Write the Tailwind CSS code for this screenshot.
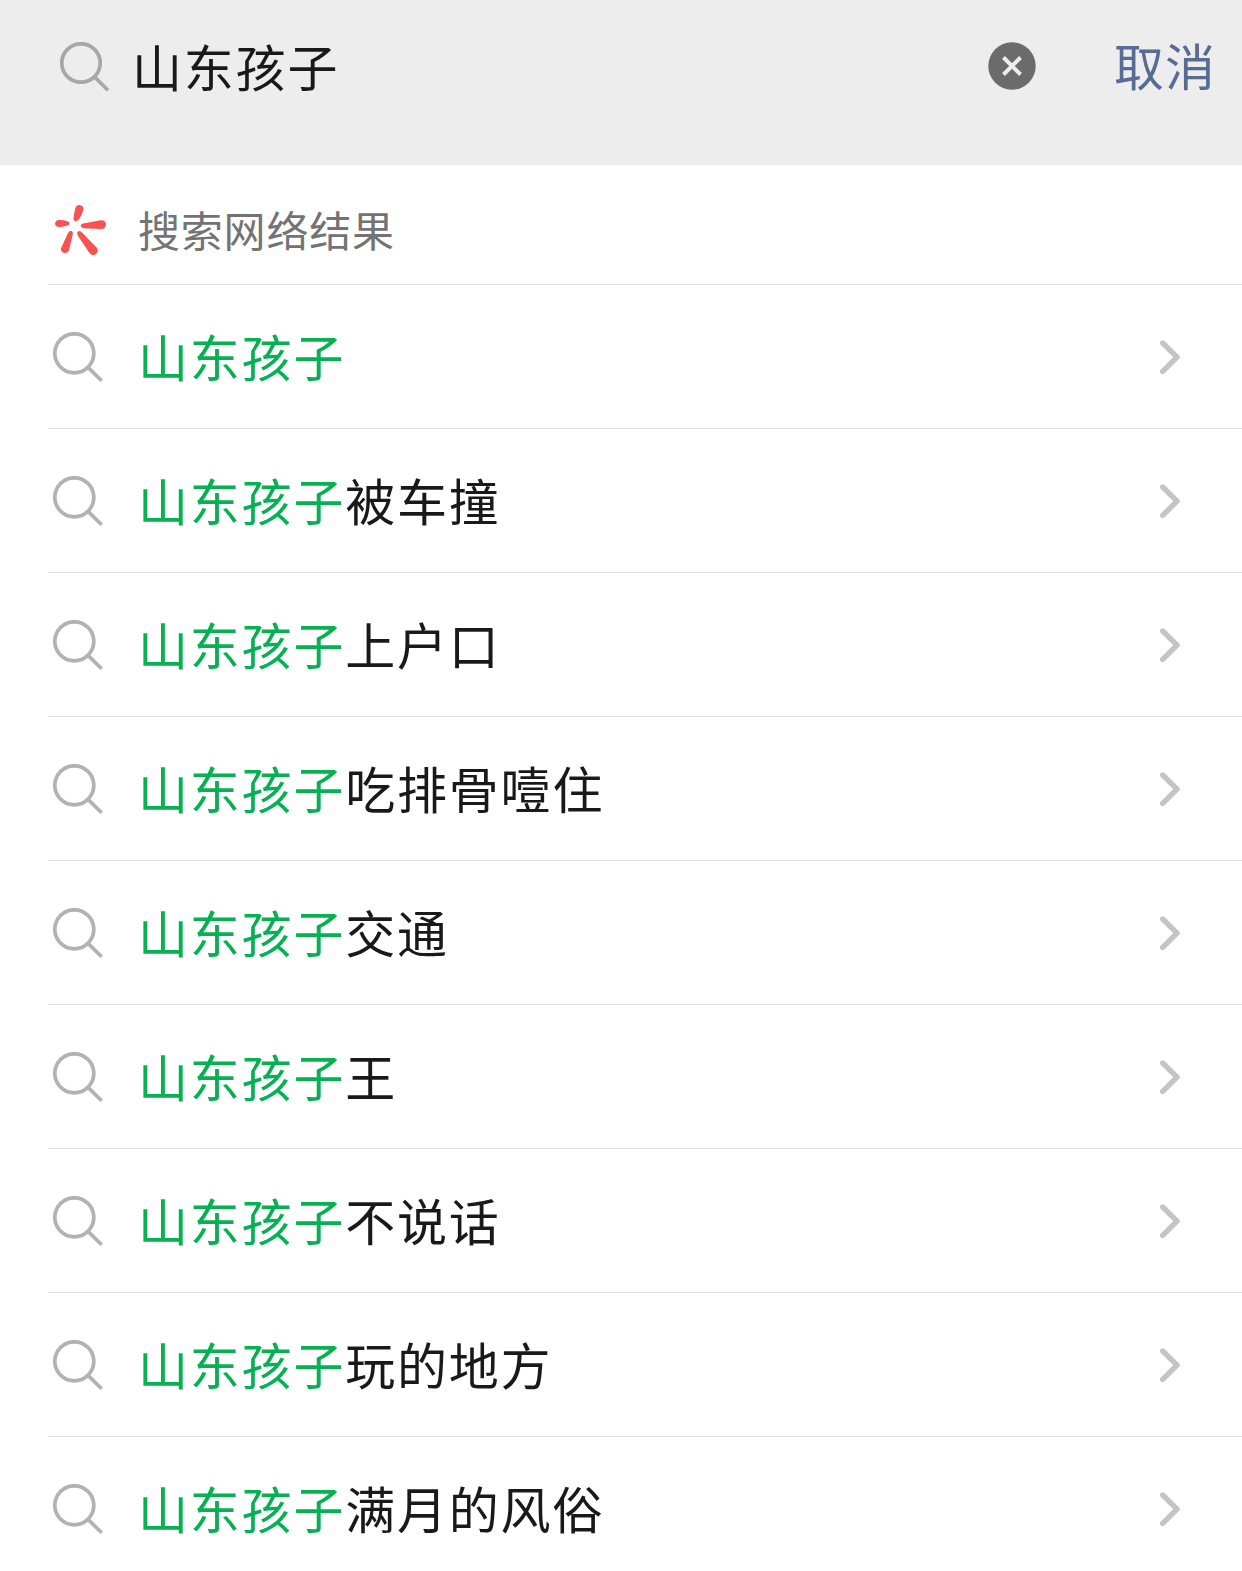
<!DOCTYPE html>
<html lang="zh-CN">
<head>
    <meta charset="UTF-8">
    <meta name="viewport" content="width=device-width, initial-scale=1.0">
    <title>搜索</title>
    <script src="https://cdn.jsdelivr.net/npm/@tailwindcss/browser@4"></script>
</head>
<body class="bg-white h-[1571px] overflow-hidden font-['Noto_Sans_CJK_SC',sans-serif] text-[#191919]">
    <header class="h-[165px] bg-[#ededed] pt-8 pl-[60px] pr-[26px]">
        <div class="h-[68px] flex items-center">
            <svg class="mt-px w-[50px] h-[50px] shrink-0" viewBox="0 0 50 50" fill="none" stroke="#a7a7a7" stroke-width="3.7">
                <circle cx="21" cy="21" r="19.2"/>
                <path d="M34.6 35L48 48.2"/>
            </svg>
            <div class="ml-[22px] mb-[2px] flex-1 text-[50px] leading-[68px] tracking-[1.8px]">山东孩子</div>
            <svg class="mb-px w-[48px] h-[48px] shrink-0" viewBox="0 0 48 48" fill="none">
                <circle cx="24" cy="24" r="23.7" fill="#6b6b6b"/>
                <path d="M15.5 15.5l17 17M32.5 15.5l-17 17" stroke="#ededed" stroke-width="4"/>
            </svg>
            <button class="ml-[78px] mb-[4px] text-[50px] leading-[68px] tracking-[1px] text-[#576b95]">取消</button>
        </div>
    </header>

    <main class="pl-12">
        <div class="h-[120px] border-b border-[#e2e2e2] flex items-center pl-[7px] pt-[11px]">
            <svg class="w-[51px] h-[50px] shrink-0" viewBox="45 45 153 150" fill="#fa5151">
                <path d="M106 54Q109 44 118 45Q132 47 130 60Q126 74 117 88Q110 95 104 93Q99 90 101 82Q103 65 106 54Z"/>
                <path d="M57 90Q68 89 82 94Q89 97 88 101Q87 105 80 107Q68 111 57 111Q46 110 45 101Q46 91 57 90Z"/>
                <path d="M126 101L182 91Q197 90 198 103Q197 117 184 117L132 115Q123 113 122 108Q122 103 126 101Z"/>
                <path d="M84 129Q89 121 95 123Q100 126 98 135L87 180Q84 189 74 189Q61 187 63 175Z"/>
                <path d="M113 125Q119 120 127 128L171 174Q177 185 168 192Q158 199 149 190L114 138Q110 130 113 125Z"/>
            </svg>
            <h2 class="ml-[32px] mb-[3px] text-[42px] leading-[60px] tracking-[0.8px] text-[#737373]">搜索网络结果</h2>
        </div>
        <ul id="resultList"></ul>
    </main>

    <script>
        const keyword = "山东孩子";
        const suffixes = ["", "被车撞", "上户口", "吃排骨噎住", "交通", "王", "不说话", "玩的地方", "满月的风俗"];
        const resultList = document.getElementById("resultList");

        suffixes.forEach((suffix) => {
            resultList.innerHTML += `
                <li class="h-[144px] border-b border-[#e2e2e2] flex items-center pl-[5px] pr-[60px]">
                    <svg class="w-[50px] h-[50px] shrink-0" viewBox="0 0 50 50" fill="none" stroke="#b2b2b2" stroke-width="3.7">
                        <circle cx="21.3" cy="21.3" r="19.5"/>
                        <path d="M35 35.4L48.8 48.8"/>
                    </svg>
                    <div class="ml-[35px] mb-[4px] flex-1 text-[50px] leading-[72px] tracking-[1.8px]"><span class="text-[#07b053]">${keyword}</span>${suffix}</div>
                    <svg class="w-[24px] h-[36px] shrink-0" viewBox="0 0 24 36" fill="none" stroke="#c4c4c5" stroke-width="5.4" stroke-linecap="round" stroke-linejoin="round">
                        <path d="M4.7 4L19 18.2L4.7 32.4"/>
                    </svg>
                </li>
            `;
        });
    </script>
</body>
</html>
